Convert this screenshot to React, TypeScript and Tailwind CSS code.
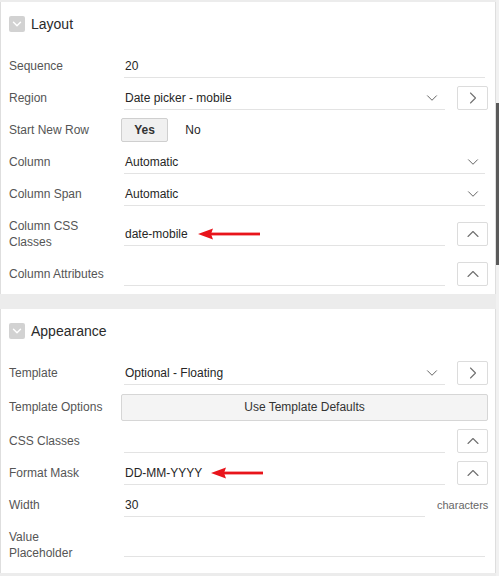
import { ChevronDown, ChevronRight, ChevronUp } from 'lucide-react';
import type { ReactNode } from 'react';

function SectionHeader({ title }: { title: string }) {
  return (
    <div className="h-[44px] flex items-center pl-[8px] gap-[6px]">
      <div className="w-4 h-4 rounded-[2px] bg-[#d2d2d2] flex items-center justify-center">
        <ChevronDown size={14} strokeWidth={2.5} className="text-white" />
      </div>
      <span className="text-[14px] text-[#2a2a2a]">{title}</span>
    </div>
  );
}

function Row({ label, tall, height, children }: { label: ReactNode; tall?: boolean; height?: string; children: ReactNode }) {
  return (
    <div className={`flex items-center pl-[8px] ${height ?? (tall ? 'h-12' : 'h-8')}`}>
      <div className="w-[112px] shrink-0 text-[12px] leading-4 text-[#555]">{label}</div>
      <div className="flex-1 flex items-center pr-[7px]">{children}</div>
    </div>
  );
}

function Field({ value, arrow, select, short, width }: { value?: string; arrow?: [number, number]; select?: boolean; short?: boolean; width?: string }) {
  return (
    <div className={`relative h-6 ml-[3px] border-b border-[#e3e3e3] flex items-center pl-px text-[12px] text-[#262626] ${width ?? (short ? 'w-[321px]' : 'w-[361px]')}`}>
      <span>{value}</span>
      {select && (
        <ChevronDown size={18} strokeWidth={1.2} className={`absolute text-[#555] ${short ? 'right-[4px]' : 'right-[3px]'}`} />
      )}
      {arrow && <RedArrow left={arrow[0]} len={arrow[1]} />}
    </div>
  );
}

function RedArrow({ left, len }: { left: number; len: number }) {
  return (
    <svg width={len} height="12" viewBox={`0 0 ${len} 12`} className="absolute" style={{ left, top: 6 }}>
      <polygon points="0,6 15,0.5 13,6 15,11.5" fill="#e8141b" />
      <rect x="12" y="4.6" width={len - 12} height="2.8" fill="#e8141b" />
    </svg>
  );
}

function IconBtn({ dir }: { dir: 'right' | 'up' }) {
  return (
    <div className="ml-3 w-[31px] h-6 border border-[#dcdcdc] rounded-[2px] flex items-center justify-center text-[#707070]">
      {dir === 'right' ? <ChevronRight size={20} strokeWidth={1.3} /> : <ChevronUp size={20} strokeWidth={1.3} />}
    </div>
  );
}

export default function App() {
  return (
    <div className="w-[499px] h-[576px] overflow-hidden flex bg-[#ececec]" style={{ fontFamily: '"Liberation Sans", Arial, sans-serif' }}>
      <div className="w-[496px] flex flex-col">
        <div className="h-[2px] bg-[#ececec]" />
        <div className="bg-white border-x border-[#dedede] pb-1">
          <SectionHeader title="Layout" />
          <div className="pt-1">
            <Row label="Sequence"><Field value="20" /></Row>
            <Row label="Region">
              <Field value="Date picker - mobile" select short />
              <IconBtn dir="right" />
            </Row>
            <Row label="Start New Row">
              <div className="flex items-center text-[12px]">
                <div className="w-[47px] h-6 bg-[#f0f0f0] border border-[#cfcfcf] rounded-[2px] flex items-center justify-center font-bold text-[#333]">Yes</div>
                <div className="w-[50px] h-6 flex items-center justify-center text-[#262626]">No</div>
              </div>
            </Row>
            <Row label="Column"><Field value="Automatic" select /></Row>
            <Row label="Column Span"><Field value="Automatic" select /></Row>
            <Row label={<>Column CSS<br />Classes</>} tall>
              <Field value="date-mobile" short arrow={[74, 62]} />
              <IconBtn dir="up" />
            </Row>
            <Row label="Column Attributes">
              <Field short />
              <IconBtn dir="up" />
            </Row>
          </div>
        </div>
        <div className="h-[15px] bg-[#ececec]" />
        <div className="bg-white border-x border-[#dedede] pb-1">
          <SectionHeader title="Appearance" />
          <div className="pt-1">
            <Row label="Template">
              <Field value="Optional - Floating" select short />
              <IconBtn dir="right" />
            </Row>
            <Row label="Template Options" height="h-[36px]">
              <div className="w-full h-[27px] bg-[#f4f4f4] border border-[#d6d6d6] rounded-[2px] flex items-center justify-center text-[12px] text-[#333]">
                Use Template Defaults
              </div>
            </Row>
            <Row label="CSS Classes">
              <Field short />
              <IconBtn dir="up" />
            </Row>
            <Row label="Format Mask">
              <Field value="DD-MM-YYYY" short arrow={[87, 52]} />
              <IconBtn dir="up" />
            </Row>
            <Row label="Width">
              <Field value="30" width="w-[301px]" />
              <span className="ml-3 text-[11px] text-[#666]">characters</span>
            </Row>
            <Row label={<>Value<br />Placeholder</>} tall>
              <Field />
            </Row>
          </div>
        </div>
      </div>
      <div className="w-[3px] flex flex-col bg-[#f1f1f1]">
        <div className="h-[103px]" />
        <div className="h-[162px] bg-[#5a5a5a]" />
      </div>
    </div>
  );
}
